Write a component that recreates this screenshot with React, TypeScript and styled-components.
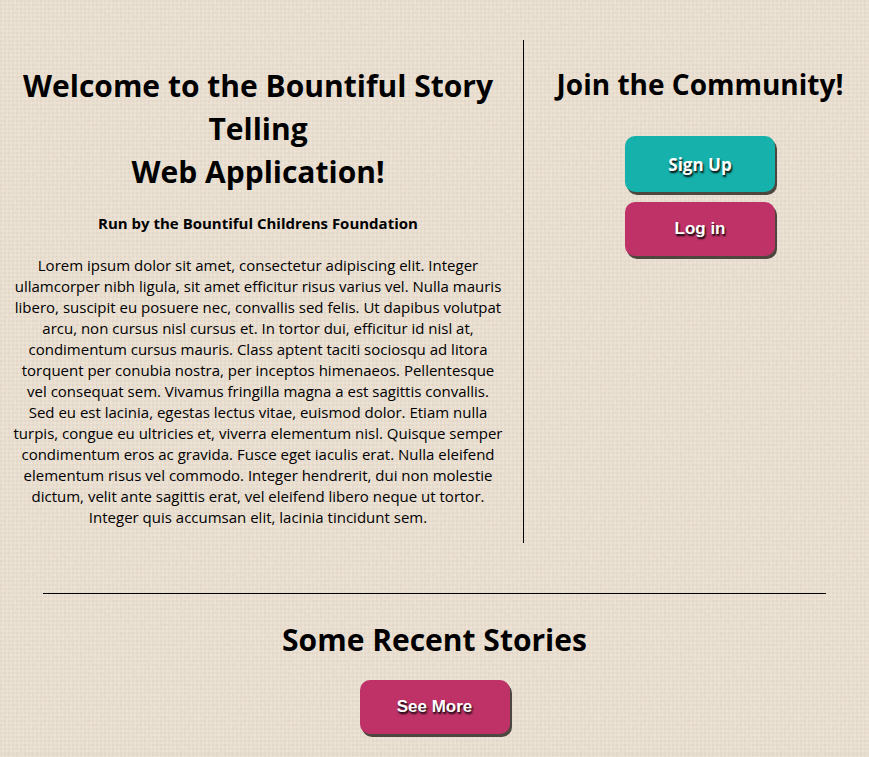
import styled, { createGlobalStyle, css } from 'styled-components';

const humanist = '"Segoe UI", "Open Sans", "Noto Sans", sans-serif';
const grotesque = 'Arial, "Liberation Sans", sans-serif';

const weave = `url("data:image/svg+xml,%3Csvg xmlns='http://www.w3.org/2000/svg' width='200' height='200'%3E%3Cfilter id='n'%3E%3CfeTurbulence type='fractalNoise' baseFrequency='.3' numOctaves='2' stitchTiles='stitch'/%3E%3CfeColorMatrix values='0 0 0 0 .5 0 0 0 0 .46 0 0 0 0 .38 .24 0 0 0 -.09'/%3E%3C/filter%3E%3Crect width='200' height='200' filter='url(%23n)'/%3E%3C/svg%3E")`;

const GlobalStyle = createGlobalStyle`
  *, *::before, *::after { box-sizing: border-box; }
  body {
    margin: 0;
    color: #000;
    font-family: ${humanist};
    background-color: #eee4d6;
    background-image:
      ${weave},
      repeating-linear-gradient(0deg, rgba(120, 105, 80, 0.04) 0 2px, transparent 2px 4px),
      repeating-linear-gradient(90deg, rgba(120, 105, 80, 0.04) 0 2px, transparent 2px 4px);
  }
`;

const Page = styled.main`
  padding: 40px 0 20px;
  text-align: center;
`;

const Columns = styled.div`
  display: grid;
  grid-template-columns: 60.3% 1fr;
`;

const Welcome = styled.section`
  padding: 24px 20px 15px 13px;
  border-right: 1px solid #000;
`;

const Join = styled.section`
  display: flex;
  flex-direction: column;
  align-items: center;
  padding: 24px 0 0 7px;
`;

const Title = styled.h1`
  margin: 0;
  font-size: 30px;
  line-height: 43px;
  font-weight: 700;
`;

const JoinTitle = styled.h2`
  margin: 0 0 32px;
  font-size: 28px;
  line-height: 40px;
  font-weight: 700;
`;

const Byline = styled.h4`
  margin: 20px 0 21px;
  font-size: 15px;
  line-height: 21px;
  font-weight: 700;
`;

const Intro = styled.p`
  margin: 0;
  font-size: 15px;
  line-height: 21px;
`;

const Stories = styled.section`
  display: flex;
  flex-direction: column;
  align-items: center;
  margin: 50px 5% 0;
  padding-top: 24px;
  border-top: 1px solid #000;
`;

const StoriesTitle = styled(Title)`
  margin-bottom: 19px;
`;

const Button = styled.button<{ $tone: 'teal' | 'rose' }>`
  width: 150px;
  border: 0;
  border-radius: 10px;
  color: #fff;
  font: 700 17px/22px ${grotesque};
  text-shadow: 1px 2px 2px #000;
  box-shadow: 2px 3px 0 #4d4740;
  cursor: pointer;
  ${({ $tone }) =>
    $tone === 'teal'
      ? css`
          margin-bottom: 10px;
          padding: 18px 0 16px;
          background: #16b1ab;
          font-family: ${humanist};
        `
      : css`
          padding: 16px 0;
          background: #bf3268;
        `}
`;

export default function App() {
  return (
    <>
      <GlobalStyle />
      <Page>
        <Columns>
          <Welcome>
            <Title>
              Welcome to the Bountiful Story Telling
              <br />
              Web Application!
            </Title>
            <Byline>Run by the Bountiful Childrens Foundation</Byline>
            <Intro>
              Lorem ipsum dolor sit amet, consectetur adipiscing elit. Integer
              ullamcorper nibh ligula, sit amet efficitur risus varius vel. Nulla mauris
              libero, suscipit eu posuere nec, convallis sed felis. Ut dapibus volutpat
              arcu, non cursus nisl cursus et. In tortor dui, efficitur id nisl at,
              condimentum cursus mauris. Class aptent taciti sociosqu ad litora
              torquent per conubia nostra, per inceptos himenaeos. Pellentesque
              vel consequat sem. Vivamus fringilla magna a est sagittis convallis.
              Sed eu est lacinia, egestas lectus vitae, euismod dolor. Etiam nulla
              turpis, congue eu ultricies et, viverra elementum nisl. Quisque semper
              condimentum eros ac gravida. Fusce eget iaculis erat. Nulla eleifend
              elementum risus vel commodo. Integer hendrerit, dui non molestie
              dictum, velit ante sagittis erat, vel eleifend libero neque ut tortor.
              Integer quis accumsan elit, lacinia tincidunt sem.
            </Intro>
          </Welcome>
          <Join>
            <JoinTitle>Join the Community!</JoinTitle>
            <Button type="button" $tone="teal">Sign Up</Button>
            <Button type="button" $tone="rose">Log in</Button>
          </Join>
        </Columns>
        <Stories>
          <StoriesTitle as="h2">Some Recent Stories</StoriesTitle>
          <Button type="button" $tone="rose">See More</Button>
        </Stories>
      </Page>
    </>
  );
}
